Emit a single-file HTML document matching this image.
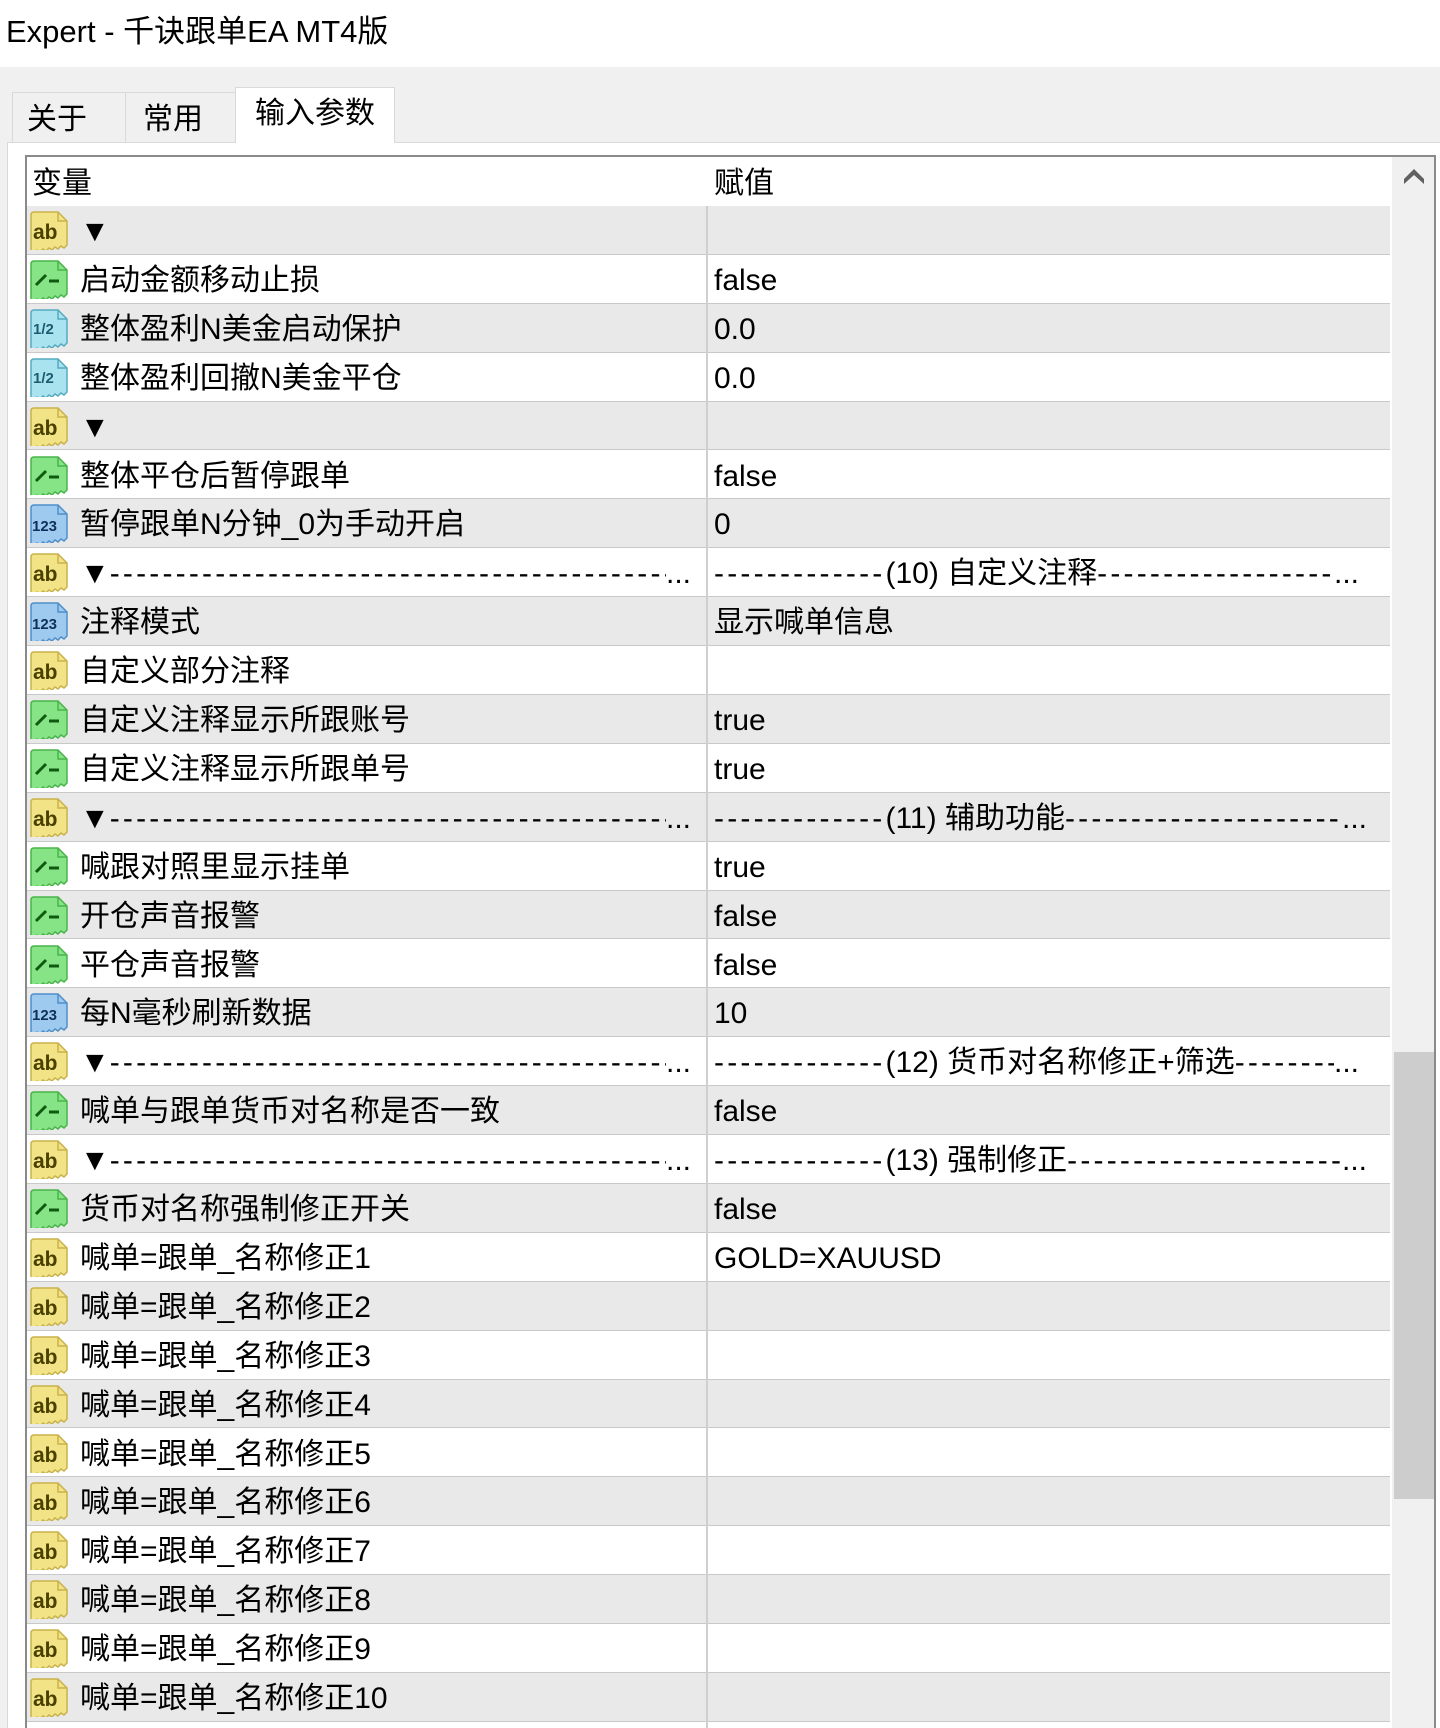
<!DOCTYPE html>
<html><head><meta charset="utf-8">
<style>
*{margin:0;padding:0;box-sizing:border-box}
body{width:1440px;height:1728px;overflow:hidden;background:#fff;font-family:"Liberation Sans","Noto Sans CJK SC",sans-serif;color:#000;position:relative}
.title{position:absolute;left:6px;top:10px;font-size:31px;line-height:44px}
.gray{position:absolute;left:0;top:67px;width:1440px;height:1661px;background:#f0f0f0}
.tab{position:absolute;top:92px;height:51px;background:#f0f0f0;border:1px solid #d9d9d9;border-bottom:none;font-size:30px;line-height:54px}
.tab.a{top:87px;height:56px;background:#fff;border-color:#d9d9d9;line-height:52px}
.panel{position:absolute;left:7px;top:142px;width:1433px;height:1586px;background:#fff;border-top:1px solid #d9d9d9;border-left:1px solid #d9d9d9}
.grid{position:absolute;left:25px;top:155px;width:1411px;height:1573px;border:2px solid #8a8a8a;border-bottom:none;background:#fff;overflow:hidden}
.hdr{position:absolute;left:0;top:0;height:50px;width:1363px;font-size:30px;line-height:54px;background:#fff}
.row{position:absolute;left:0;width:1363px;height:48.9px;border-bottom:1.5px solid #c9c9c9;font-size:30px;line-height:51px;background:#fff}
.row.g{background:#e9e9e9}
.c1{position:absolute;left:53px;width:630px;white-space:nowrap;overflow:hidden}
.c2{position:absolute;left:687px;width:660px;white-space:nowrap;overflow:hidden}
.d{letter-spacing:3.2px}
.el{position:absolute;top:0;height:46px;overflow:hidden;background:inherit;width:30px}
.ic{position:absolute;left:2px;top:4px;width:40px;height:40px}
.sb{position:absolute;left:1363px;top:0;width:44px;height:1573px;background:#f0f0f0;border-left:2px solid #fff}
.thumb{position:absolute;left:2px;top:895px;width:40px;height:447px;background:#cdcdcd}
.vd{position:absolute;left:706px;top:206px;width:1.5px;height:1522px;background:#cfcfcf;z-index:10}
</style></head><body>
<svg width="0" height="0" style="position:absolute">
<defs>
<path id="body" d="M2 5 Q2 2 5 2 H29 L38 11 V35 l-3 3 -3 -2 -3 3 -3 -2 -3 3 -3 -2 -3 3 -3 -2 -3 3 -3 -2 -3 3 -3 -2 Z"/>
<path id="fold" d="M29 2 V11 H38" fill="none"/>
<g id="ab"><use href="#body" fill="#f2e387" stroke="#c9b24a" stroke-width="1.5"/><use href="#fold" stroke="#c9b24a" stroke-width="1.5"/><text x="4" y="29" font-size="21" font-weight="bold" fill="#4a4100" font-family="Liberation Sans">ab</text></g>
<g id="bo"><use href="#body" fill="#86e486" stroke="#49b449" stroke-width="1.5"/><use href="#fold" stroke="#49b449" stroke-width="1.5"/><path d="M7 26 L17 16 M20 22 H30" stroke="#0f5a0f" stroke-width="3" fill="none"/></g>
<g id="hf"><use href="#body" fill="#a9e3ef" stroke="#55aac0" stroke-width="1.5"/><use href="#fold" stroke="#55aac0" stroke-width="1.5"/><text x="4" y="26" font-size="15" font-weight="bold" fill="#1d5c6e" font-family="Liberation Sans">1/2</text></g>
<g id="nm"><use href="#body" fill="#9fcaf0" stroke="#4f8fc9" stroke-width="1.5"/><use href="#fold" stroke="#4f8fc9" stroke-width="1.5"/><text x="3" y="28" font-size="15" font-weight="bold" fill="#0f2f5c" font-family="Liberation Sans">123</text></g>
</defs></svg>
<div class="title">Expert - 千诀跟单EA MT4版</div>
<div class="gray"></div>
<div class="tab" style="left:12px;width:114px;padding-left:14px">关于</div>
<div class="tab" style="left:125px;width:111px;padding-left:17px">常用</div>
<div class="panel"></div>
<div class="tab a" style="left:235px;width:160px;padding-left:19px">输入参数</div>
<div class="grid">
<div class="hdr"><span style="position:absolute;left:5px">变量</span><span style="position:absolute;left:687px">赋值</span></div>
<div class="sb"><svg style="position:absolute;left:12px;top:10px" width="20" height="18"><path d="M0 17 V12 L10 2 L20 12 V17 L10 8 Z" fill="#606060"/></svg><div class="thumb"></div></div>
</div>
<div style="position:absolute;left:27px;top:206px;width:1363px">
<div class="row g" style="top:0"><svg class="ic" viewBox="0 0 40 40"><use href="#ab"/></svg><span class="c1">▼</span></div>
<div class="row" style="top:48.9px"><svg class="ic" viewBox="0 0 40 40"><use href="#bo"/></svg><span class="c1">启动金额移动止损</span><span class="c2">false</span></div>
<div class="row g" style="top:97.8px"><svg class="ic" viewBox="0 0 40 40"><use href="#hf"/></svg><span class="c1">整体盈利N美金启动保护</span><span class="c2">0.0</span></div>
<div class="row" style="top:146.7px"><svg class="ic" viewBox="0 0 40 40"><use href="#hf"/></svg><span class="c1">整体盈利回撤N美金平仓</span><span class="c2">0.0</span></div>
<div class="row g" style="top:195.6px"><svg class="ic" viewBox="0 0 40 40"><use href="#ab"/></svg><span class="c1">▼</span></div>
<div class="row" style="top:244.5px"><svg class="ic" viewBox="0 0 40 40"><use href="#bo"/></svg><span class="c1">整体平仓后暂停跟单</span><span class="c2">false</span></div>
<div class="row g" style="top:293.4px"><svg class="ic" viewBox="0 0 40 40"><use href="#nm"/></svg><span class="c1">暂停跟单N分钟_0为手动开启</span><span class="c2">0</span></div>
<div class="row" style="top:342.3px"><svg class="ic" viewBox="0 0 40 40"><use href="#ab"/></svg><span class="c1" style="width:586px">▼<span class="d">------------------------------------------------------------</span></span><span class="el" style="left:639px">...</span><span class="c2" style="width:620px"><span class="d">-------------</span>(10) 自定义注释<span class="d">--------------------------------------------</span></span><span class="el" style="left:1307px">...</span></div>
<div class="row g" style="top:391.2px"><svg class="ic" viewBox="0 0 40 40"><use href="#nm"/></svg><span class="c1">注释模式</span><span class="c2">显示喊单信息</span></div>
<div class="row" style="top:440.1px"><svg class="ic" viewBox="0 0 40 40"><use href="#ab"/></svg><span class="c1">自定义部分注释</span></div>
<div class="row g" style="top:489px"><svg class="ic" viewBox="0 0 40 40"><use href="#bo"/></svg><span class="c1">自定义注释显示所跟账号</span><span class="c2">true</span></div>
<div class="row" style="top:537.9px"><svg class="ic" viewBox="0 0 40 40"><use href="#bo"/></svg><span class="c1">自定义注释显示所跟单号</span><span class="c2">true</span></div>
<div class="row g" style="top:586.8px"><svg class="ic" viewBox="0 0 40 40"><use href="#ab"/></svg><span class="c1" style="width:586px">▼<span class="d">------------------------------------------------------------</span></span><span class="el" style="left:639px">...</span><span class="c2" style="width:628px"><span class="d">-------------</span>(11) 辅助功能<span class="d">--------------------------------------------------</span></span><span class="el" style="left:1315px">...</span></div>
<div class="row" style="top:635.7px"><svg class="ic" viewBox="0 0 40 40"><use href="#bo"/></svg><span class="c1">喊跟对照里显示挂单</span><span class="c2">true</span></div>
<div class="row g" style="top:684.6px"><svg class="ic" viewBox="0 0 40 40"><use href="#bo"/></svg><span class="c1">开仓声音报警</span><span class="c2">false</span></div>
<div class="row" style="top:733.5px"><svg class="ic" viewBox="0 0 40 40"><use href="#bo"/></svg><span class="c1">平仓声音报警</span><span class="c2">false</span></div>
<div class="row g" style="top:782.4px"><svg class="ic" viewBox="0 0 40 40"><use href="#nm"/></svg><span class="c1">每N毫秒刷新数据</span><span class="c2">10</span></div>
<div class="row" style="top:831.3px"><svg class="ic" viewBox="0 0 40 40"><use href="#ab"/></svg><span class="c1" style="width:586px">▼<span class="d">------------------------------------------------------------</span></span><span class="el" style="left:639px">...</span><span class="c2" style="width:620px"><span class="d">-------------</span>(12) 货币对名称修正+筛选<span class="d">-------------------------------------</span></span><span class="el" style="left:1307px">...</span></div>
<div class="row g" style="top:880.2px"><svg class="ic" viewBox="0 0 40 40"><use href="#bo"/></svg><span class="c1">喊单与跟单货币对名称是否一致</span><span class="c2">false</span></div>
<div class="row" style="top:929.1px"><svg class="ic" viewBox="0 0 40 40"><use href="#ab"/></svg><span class="c1" style="width:586px">▼<span class="d">------------------------------------------------------------</span></span><span class="el" style="left:639px">...</span><span class="c2" style="width:628px"><span class="d">-------------</span>(13) 强制修正<span class="d">--------------------------------------------------</span></span><span class="el" style="left:1315px">...</span></div>
<div class="row g" style="top:978px"><svg class="ic" viewBox="0 0 40 40"><use href="#bo"/></svg><span class="c1">货币对名称强制修正开关</span><span class="c2">false</span></div>
<div class="row" style="top:1026.9px"><svg class="ic" viewBox="0 0 40 40"><use href="#ab"/></svg><span class="c1">喊单=跟单_名称修正1</span><span class="c2">GOLD=XAUUSD</span></div>
<div class="row g" style="top:1075.8px"><svg class="ic" viewBox="0 0 40 40"><use href="#ab"/></svg><span class="c1">喊单=跟单_名称修正2</span></div>
<div class="row" style="top:1124.7px"><svg class="ic" viewBox="0 0 40 40"><use href="#ab"/></svg><span class="c1">喊单=跟单_名称修正3</span></div>
<div class="row g" style="top:1173.6px"><svg class="ic" viewBox="0 0 40 40"><use href="#ab"/></svg><span class="c1">喊单=跟单_名称修正4</span></div>
<div class="row" style="top:1222.5px"><svg class="ic" viewBox="0 0 40 40"><use href="#ab"/></svg><span class="c1">喊单=跟单_名称修正5</span></div>
<div class="row g" style="top:1271.4px"><svg class="ic" viewBox="0 0 40 40"><use href="#ab"/></svg><span class="c1">喊单=跟单_名称修正6</span></div>
<div class="row" style="top:1320.3px"><svg class="ic" viewBox="0 0 40 40"><use href="#ab"/></svg><span class="c1">喊单=跟单_名称修正7</span></div>
<div class="row g" style="top:1369.2px"><svg class="ic" viewBox="0 0 40 40"><use href="#ab"/></svg><span class="c1">喊单=跟单_名称修正8</span></div>
<div class="row" style="top:1418.1px"><svg class="ic" viewBox="0 0 40 40"><use href="#ab"/></svg><span class="c1">喊单=跟单_名称修正9</span></div>
<div class="row g" style="top:1467px"><svg class="ic" viewBox="0 0 40 40"><use href="#ab"/></svg><span class="c1">喊单=跟单_名称修正10</span></div>
</div>
<div class="vd"></div>
</body></html>
